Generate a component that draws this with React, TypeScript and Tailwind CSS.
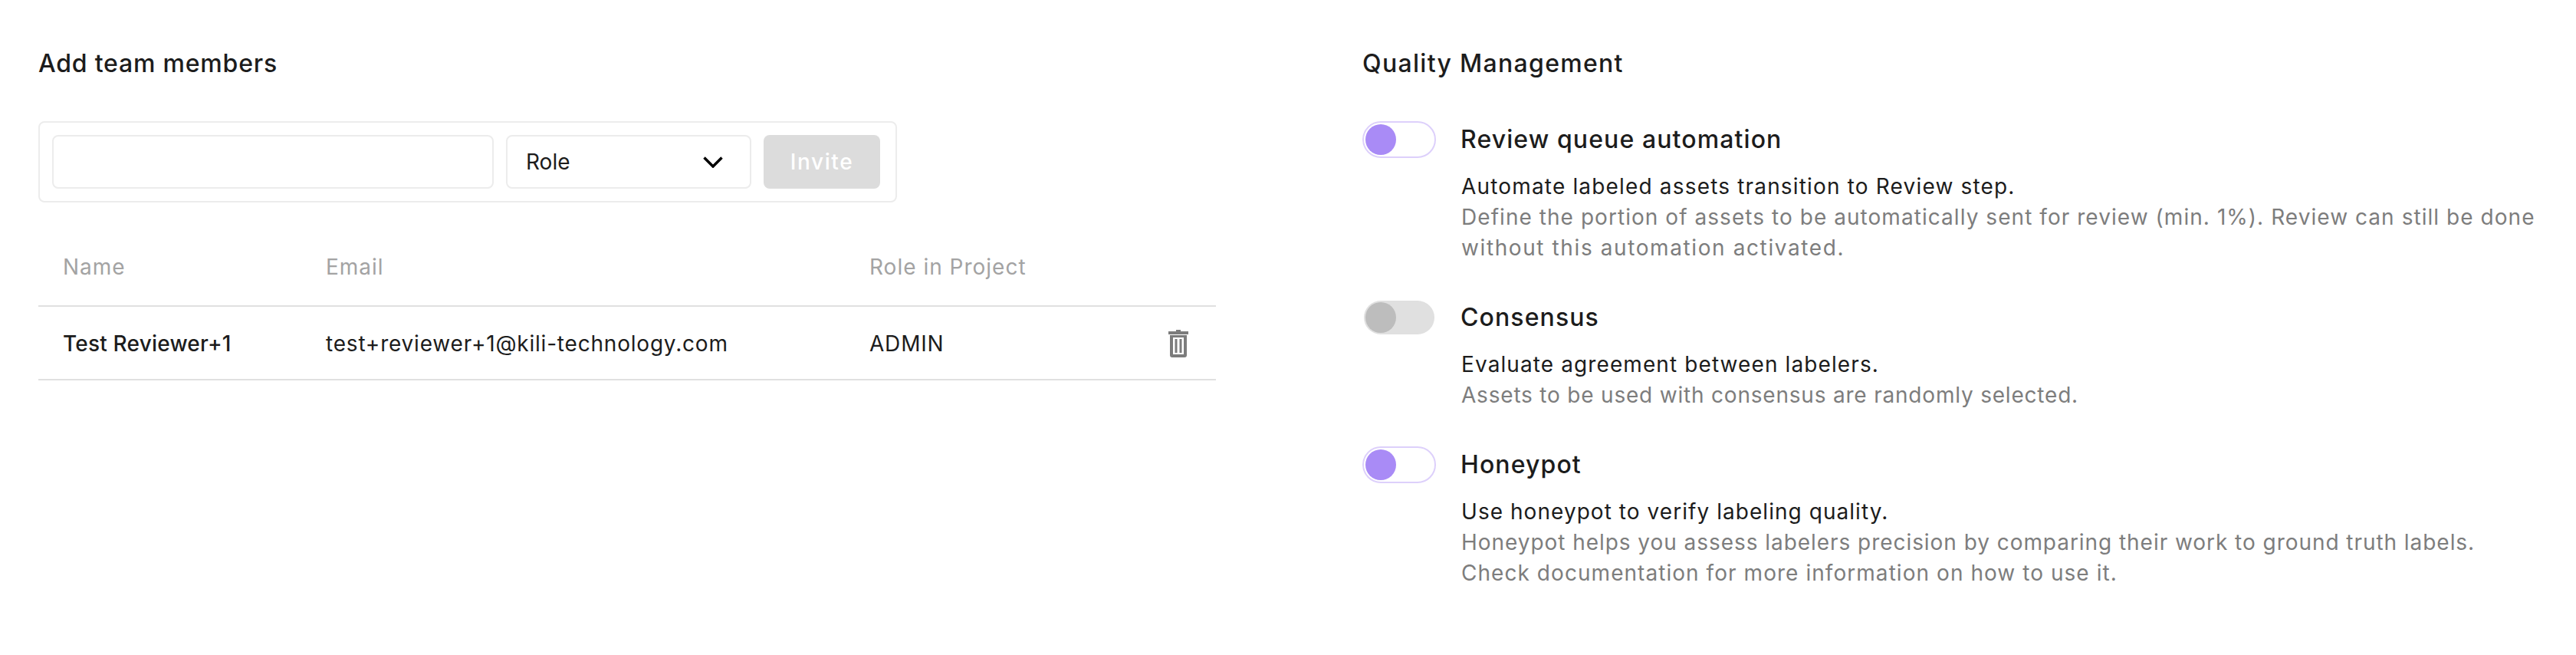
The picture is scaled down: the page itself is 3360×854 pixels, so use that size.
const font = { fontFamily: '"Inter", sans-serif' }

const TrashIcon = () => (
  <svg width="26" height="36" viewBox="0 0 26 36" className="text-[#7c7c7c]" fill="currentColor">
    <rect x="10" y="0" width="6" height="3" />
    <rect x="0" y="2" width="26" height="4" />
    <path d="M2 7h22v26a3 3 0 0 1-3 3H5a3 3 0 0 1-3-3V7zm4 3v22h14V10H6z" fillRule="evenodd" />
    <rect x="8.500" y="12" width="3" height="18" />
    <rect x="14.500" y="12" width="3" height="18" />
  </svg>
)

const ChevronIcon = () => (
  <svg width="26" height="15" viewBox="0 0 26 15" fill="none" stroke="#000" strokeWidth="3.500">
    <path d="M1.500 1.500L13 13L24.500 1.500" />
  </svg>
)

const Toggle = ({ on }: { on: boolean }) =>
  on ? (
    <span className="flex h-12 w-24 shrink-0 items-center rounded-full border-2 border-[#ddd0fb] bg-white pl-[2px]">
      <span className="size-10 rounded-full bg-[#a98bf6]" />
    </span>
  ) : (
    <span className="mx-[2px] flex h-11 w-[92px] shrink-0 items-center rounded-full bg-[#e0e0e0] pl-[2px]">
      <span className="size-10 rounded-full bg-[#bdbdbd]" />
    </span>
  )

const settings = [
  {
    title: 'Review queue automation',
    on: true,
    text: 'Automate labeled assets transition to Review step.',
    textClass: 'tracking-[1.17px]',
    help: [
      { line: 'Define the portion of assets to be automatically sent for review (min. 1%). Review can still be done', className: 'tracking-[1.05px]' },
      { line: 'without this automation activated.', className: 'tracking-[1.6px]' },
    ],
  },
  {
    title: 'Consensus',
    on: false,
    text: 'Evaluate agreement between labelers.',
    textClass: 'tracking-[1.1px]',
    help: [{ line: 'Assets to be used with consensus are randomly selected.', className: 'tracking-[0.8px]' }],
  },
  {
    title: 'Honeypot',
    on: true,
    text: 'Use honeypot to verify labeling quality.',
    textClass: 'tracking-[1.05px]',
    help: [
      { line: 'Honeypot helps you assess labelers precision by comparing their work to ground truth labels.', className: 'tracking-[0.95px]' },
      { line: 'Check documentation for more information on how to use it.', className: 'tracking-[1.05px]' },
    ],
  },
]

const App = () => {
  return (
    <div className="flex min-h-[854px] bg-white pt-[59px] pl-[50px] text-[#1c1c1c]" style={font}>
      <div className="w-[1536px]">
        <h2 className="text-[32px] leading-[48px] font-medium tracking-[0.8px]">Add team members</h2>

        <div className="mt-[51px] flex w-[1120px] gap-4 rounded-lg border-2 border-[#ececec] p-4">
          <input className="h-[70px] w-[576px] rounded-lg border-2 border-[#ececec]" />
          <div className="flex h-[70px] w-[320px] items-center justify-between rounded-lg border-2 border-[#ececec] pr-[35px] pl-[24px] text-[28px]">
            Role
            <ChevronIcon />
          </div>
          <button className="h-[70px] w-[152px] rounded-lg bg-[#dcdcdc] text-[28px] font-medium tracking-[1.6px] text-white">Invite</button>
        </div>

        <div className="mt-[64px] flex h-[72px] items-start border-b-2 border-[#e0e0e0] text-[28px] leading-[40px] tracking-[1px] text-[#a3a3a3]">
          <span className="w-[343px] pl-8">Name</span>
          <span className="w-[709px] pl-8">Email</span>
          <span className="pl-8">Role in Project</span>
        </div>
        <div className="flex h-[96px] items-center border-b-2 border-[#e0e0e0] pt-[2px] text-[28px]">
          <span className="w-[343px] pl-8 font-medium tracking-[0.2px]">Test Reviewer+1</span>
          <span className="w-[709px] pl-8 tracking-[0.8px]">test+reviewer+1@kili-technology.com</span>
          <span className="flex-1 pl-8 tracking-[0.8px]">ADMIN</span>
          <span className="pr-[36px]">
            <TrashIcon />
          </span>
        </div>
      </div>

      <div className="ml-[191px]">
        <h2 className="text-[32px] leading-[48px] font-medium tracking-[1.3px]">Quality Management</h2>

        <div className="mt-[51px] flex flex-col gap-[47px]">
          {settings.map((setting) => (
            <div key={setting.title}>
              <div className="flex h-12 items-center gap-8">
                <Toggle on={setting.on} />
                <span className="text-[32px] font-medium tracking-[1.1px]">{setting.title}</span>
              </div>
              <div className="mt-[17px] pl-[129px] text-[28px] leading-[40px]">
                <p className={setting.textClass}>{setting.text}</p>
                {setting.help.map((item) => (
                  <p key={item.line} className={`text-[#7d7d7d] ${item.className}`}>
                    {item.line}
                  </p>
                ))}
              </div>
            </div>
          ))}
        </div>
      </div>
    </div>
  )
}

export default App
